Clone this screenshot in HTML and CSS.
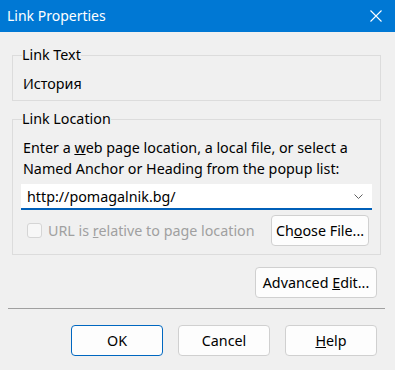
FILE: index.html
```html
<!DOCTYPE html>
<html lang="en">
<head>
    <meta charset="UTF-8">
    <meta name="viewport" content="width=device-width, initial-scale=1.0">
    <title>Link Properties</title>
    <link rel="stylesheet" href="styles.css">
</head>
<body>
    <div class="dialog">
        <div class="titlebar">
            <span class="title">Link Properties</span>
            <svg class="close" width="12" height="12" viewBox="0 0 12 12">
                <path d="M0.5 0.5 L11.5 11.5 M11.5 0.5 L0.5 11.5" stroke="#fff" stroke-width="1.1"/>
            </svg>
        </div>

        <div class="content">
            <fieldset class="group">
                <legend>Link Text</legend>
                <div class="link-text">История</div>
            </fieldset>

            <fieldset class="group location">
                <legend>Link Location</legend>
                <div class="hint">Enter a <u>w</u>eb page location, a local file, or select a<br>Named Anchor or Heading from the popup list:</div>
                <div class="combo">
                    <span class="combo-value">http://pomagalnik.bg/</span>
                    <svg class="chevron" width="9" height="5" viewBox="0 0 9 5">
                        <path d="M0.5 0.5 L4.5 4.5 L8.5 0.5" fill="none" stroke="#606060" stroke-width="1"/>
                    </svg>
                </div>
                <div class="file-row">
                    <label class="check disabled">
                        <span class="box"></span>
                        <span>URL is <u>r</u>elative to page location</span>
                    </label>
                    <button class="btn choose">Ch<u>o</u>ose File...</button>
                </div>
            </fieldset>

            <div class="advanced-row">
                <button class="btn advanced">Advanced <u>E</u>dit...</button>
            </div>
        </div>

        <div class="separator"></div>

        <div class="actions">
            <button class="btn default">OK</button>
            <button class="btn">Cancel</button>
            <button class="btn"><u>H</u>elp</button>
        </div>
    </div>
</body>
</html>
```

FILE: styles.css
```css
html, body {
    margin: 0;
    padding: 0;
}
body {
    font-family: "Noto Sans", "Open Sans", sans-serif;
    font-size: 14.3px;
    color: #000;
    background-color: #f0f0f0;
}
.dialog {
    width: 395px;
    height: 370px;
    overflow: hidden;
}
.titlebar {
    height: 32px;
    background-color: #0078d4;
    color: #fff;
    display: flex;
    align-items: center;
    justify-content: space-between;
    padding: 0 13px 0 7px;
    font-size: 14px;
}
.title {
    margin-top: -1px;
}
.content {
    padding: 13px 14px 0 12px;
}
.group {
    margin: 0;
    border: 1px solid #dcdcdc;
    padding: 0 8px 6px 8px;
}
.group legend {
    padding: 0;
    margin-left: 1px;
    line-height: 20px;
}
.link-text {
    margin-top: 9px;
    padding-left: 2px;
    line-height: 20px;
}
.location {
    margin-top: 8px;
    padding-bottom: 8px;
}
.hint {
    margin-top: 8px;
    padding-left: 2px;
    line-height: 21px;
}
.combo {
    margin-top: 5px;
    height: 24px;
    background-color: #fff;
    border-bottom: 2px solid #005fb8;
    display: flex;
    align-items: center;
    justify-content: space-between;
    padding: 0 9px 0 6px;
}
.combo-value {
    margin-top: 1px;
}
.file-row {
    margin-top: 5px;
    display: flex;
    align-items: center;
    justify-content: space-between;
    padding-right: 3px;
}
.check {
    display: flex;
    align-items: center;
    gap: 6px;
    padding-left: 6px;
    white-space: nowrap;
}
.check.disabled {
    color: #a0a0a0;
}
.box {
    width: 13px;
    height: 13px;
    border: 1px solid #d5d5d5;
    border-radius: 3px;
    background-color: #f7f7f7;
}
.btn {
    font-family: inherit;
    font-size: 14.3px;
    color: #000;
    background-color: #fdfdfd;
    border: 1px solid #d0d0d0;
    border-radius: 4px;
    height: 31px;
    padding: 0;
    margin: 0;
    white-space: nowrap;
}
.choose {
    width: 98px;
}
.advanced-row {
    display: flex;
    justify-content: flex-end;
    margin-top: 12px;
    padding-right: 4px;
}
.advanced {
    width: 122px;
}
.separator {
    margin: 10px 10px 0 8px;
    height: 1px;
    background-color: #a0a0a0;
}
.actions {
    display: flex;
    justify-content: flex-end;
    gap: 15px;
    margin-top: 16px;
    padding-right: 18px;
}
.actions .btn {
    width: 92px;
}
.btn.default {
    border-color: #0067c0;
}
```
